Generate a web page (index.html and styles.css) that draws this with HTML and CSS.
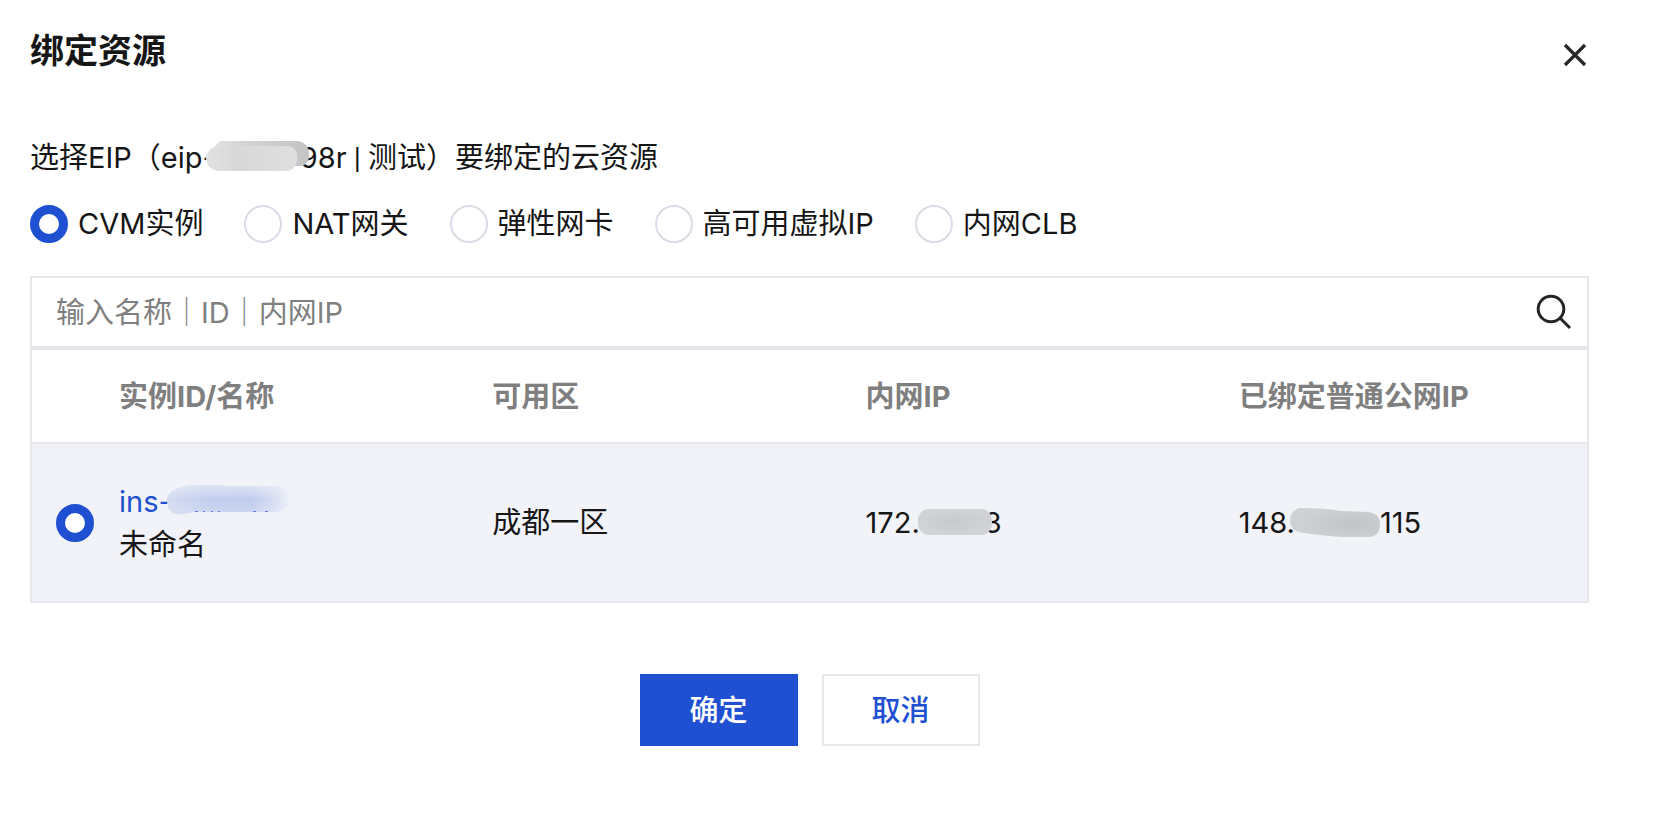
FILE: index.html
```html
<!DOCTYPE html>
<html lang="zh-CN">
<head>
<meta charset="utf-8">
<meta name="viewport" content="width=device-width, initial-scale=1">
<title>绑定资源</title>
<link rel="stylesheet" href="styles.css">
</head>
<body>
<main class="dialog">
  <header class="dialog-head">
    <h1 class="title">绑定资源</h1>
    <button class="close" type="button" aria-label="关闭">
      <svg width="24" height="24" viewBox="0 0 24 24" fill="none" stroke="#262626" stroke-width="3.2"><path d="M2 2L22 22M22 2L2 22"/></svg>
    </button>
  </header>

  <p class="hint">选择EIP（eip-<svg class="mask mask-eip" width="104" height="30" viewBox="0 0 104 30" aria-hidden="true">
      <defs>
        <linearGradient id="g1"><stop offset="0" stop-color="#e2e2e2"/><stop offset=".35" stop-color="#d3d3d3"/><stop offset="1" stop-color="#c4c4c4"/></linearGradient>
        <linearGradient id="g2"><stop offset="0" stop-color="#e2e2e2"/><stop offset=".35" stop-color="#d8d8d8"/><stop offset="1" stop-color="#dfdfdf"/></linearGradient>
      </defs>
      <path d="M14 0H91Q103 1 103 14Q103 25 93 25H10Q2 10 14 0Z" fill="url(#g1)"/>
      <path d="M10 5H80Q91 5 91 16V20Q89 30 79 30H12Q0 28 0 16Q2 8 10 5Z" fill="url(#g2)"/>
    </svg>98r<span class="bar"> | </span>测试）要绑定的云资源</p>

  <div class="types" role="radiogroup" aria-label="资源类型">
    <label class="type"><input class="radio" type="radio" name="type" checked>CVM实例</label>
    <label class="type"><input class="radio" type="radio" name="type">NAT网关</label>
    <label class="type"><input class="radio" type="radio" name="type">弹性网卡</label>
    <label class="type"><input class="radio" type="radio" name="type">高可用虚拟IP</label>
    <label class="type"><input class="radio" type="radio" name="type">内网CLB</label>
  </div>

  <form class="search">
    <input class="search-input" type="text" aria-label="搜索实例" placeholder="输入名称｜ID｜内网IP">
    <button class="search-button" type="button" aria-label="搜索">
      <svg width="36" height="36" viewBox="0 0 36 36" fill="none" stroke="#262626" stroke-width="3"><circle cx="15" cy="15" r="12.8"/><path d="M24 24L34 34"/></svg>
    </button>
  </form>

  <table class="grid">
    <colgroup><col class="col-pick"><col><col><col><col></colgroup>
    <thead>
      <tr><td></td><th scope="col">实例ID/名称</th><th scope="col">可用区</th><th scope="col">内网IP</th><th scope="col">已绑定普通公网IP</th></tr>
    </thead>
    <tbody>
      <tr>
        <td class="pick"><input class="radio" type="radio" name="instance" aria-label="未命名" checked></td>
        <td><a class="link" href="#">ins-<svg class="mask mask-ins" width="123" height="30" viewBox="0 0 123 30" aria-hidden="true">
            <defs>
              <linearGradient id="g3"><stop offset="0" stop-color="#d3dbf1"/><stop offset=".35" stop-color="#c2cdee"/><stop offset=".7" stop-color="#c0ccee"/><stop offset=".9" stop-color="#d9e0f3"/><stop offset="1" stop-color="#edf0f8"/></linearGradient>
              <linearGradient id="g4" x2="0" y2="1"><stop offset="0" stop-color="#f2f4f9" stop-opacity=".6"/><stop offset=".5" stop-color="#f2f4f9" stop-opacity="0"/><stop offset="1" stop-color="#f2f4f9" stop-opacity=".3"/></linearGradient>
            </defs>
            <path d="M25 0H50Q55 1 60 1H108Q122 2 122 14Q122 26 108 27H28Q22 28 17 29Q0 32 0 15Q0 3 25 0Z" fill="url(#g3)"/>
            <path d="M25 0H50Q55 1 60 1H108Q122 2 122 14Q122 26 108 27H28Q22 28 17 29Q0 32 0 15Q0 3 25 0Z" fill="url(#g4)"/>
            <path d="M28 26.5h3M36 26.5h2M44 26.5h2M51 26.5h2M86 26.5h3M98 26.5h3" stroke="#5f80dc" stroke-width="1"/>
          </svg></a><br>未命名</td>
        <td>成都一区</td>
        <td>172.<svg class="mask mask-lan" width="74" height="26" viewBox="0 0 74 26" aria-hidden="true">
            <defs><radialGradient id="g5"><stop offset="0" stop-color="#c8c9cc"/><stop offset="1" stop-color="#d2d3d7"/></radialGradient></defs>
            <rect width="74" height="26" rx="11" fill="url(#g5)"/>
          </svg>3</td>
        <td>148.<svg class="mask mask-wan" width="90" height="30" viewBox="0 0 90 30" aria-hidden="true">
            <defs><radialGradient id="g6" cx=".7" cy=".55" r=".6"><stop offset="0" stop-color="#c3c4c7"/><stop offset="1" stop-color="#cfd0d4"/></radialGradient></defs>
            <path d="M10 0Q34 0 52 3L78 4Q90 5 90 16Q90 29 78 29H54Q36 28 14 25Q0 24 0 12Q1 2 10 0Z" fill="url(#g6)"/>
          </svg>115</td>
      </tr>
    </tbody>
  </table>

  <footer class="actions">
    <button class="btn btn-primary" type="button">确定</button>
    <button class="btn" type="button">取消</button>
  </footer>
</main>
</body>
</html>
```
FILE: styles.css
```css
* { box-sizing: border-box; }

:root {
  --blue: #2050d2;
  --line: #e5e7ed;
  --text: #161616;
  --muted: #7f7f7f;
}

body {
  margin: 0;
  background: #fff;
  color: var(--text);
  font: 29px/43px Inter, "Noto Sans CJK SC", sans-serif;
}

button, input { font: inherit; }

.dialog { padding: 26px 69px 40px 30px; }

.dialog-head {
  display: flex;
  align-items: center;
  justify-content: space-between;
}

.title {
  margin: 0;
  font-size: 34px;
  line-height: 50px;
  font-weight: 700;
}

.close, .search-button {
  display: flex;
  padding: 0;
  border: 0;
  background: none;
  cursor: pointer;
}

.close { padding: 8px 2px 0 0; }

.hint { margin: 60px 0 22px; }

/* Compact separator between the ID and its name */
.bar { font-family: Roboto, sans-serif; }

.types {
  display: flex;
  flex-wrap: wrap;
  gap: 12px 41px;
}

.type {
  display: flex;
  align-items: center;
  gap: 10px;
}

.radio {
  appearance: none;
  flex: none;
  width: 38px;
  height: 38px;
  margin: 0;
  border: 2px solid #d8dce5;
  border-radius: 50%;
  background: #fff;
}

.radio:checked { border: 9px solid var(--blue); }

.search {
  display: flex;
  align-items: center;
  margin-top: 31px;
  height: 72px;
  padding: 0 15px 0 24px;
  border: 2px solid var(--line);
}

.search-input {
  flex: 1;
  min-width: 0;
  padding: 0;
  border: 0;
  outline: 0;
  color: var(--text);
  background: none;
}

.search-input::placeholder { color: var(--muted); opacity: 1; }

.grid {
  width: 100%;
  table-layout: fixed;
  border: 2px solid var(--line);
  border-spacing: 0;
}

.col-pick { width: 62px; }

.grid th, .grid td {
  padding: 0 0 0 25px;
  text-align: left;
}

.grid th {
  height: 92px;
  color: var(--muted);
  font-weight: 700;
}

.grid tbody td {
  height: 159px;
  border-top: 2px solid var(--line);
  background: #f2f3f8;
}

.grid .pick { padding-left: 24px; }
.pick .radio { display: block; }

.link { color: var(--blue); text-decoration: none; }

/* Smears that hide part of an identifier */
.mask { position: relative; vertical-align: middle; }
.mask-eip { margin: -8px -10px 0 -10px; }
.mask-ins { margin: -8px 0 0 -5px; }
.mask-lan { margin: -6px -8px 0 -2px; }
.mask-wan { margin: -5px 0 0 -5px; }

.actions {
  display: flex;
  justify-content: center;
  gap: 24px;
  margin-top: 71px;
}

.btn {
  width: 158px;
  height: 72px;
  padding: 0;
  border: 2px solid var(--line);
  background: #fff;
  color: var(--blue);
  font-weight: 500;
  cursor: pointer;
}

.btn-primary {
  border-color: var(--blue);
  background: var(--blue);
  color: #fff;
}
```
